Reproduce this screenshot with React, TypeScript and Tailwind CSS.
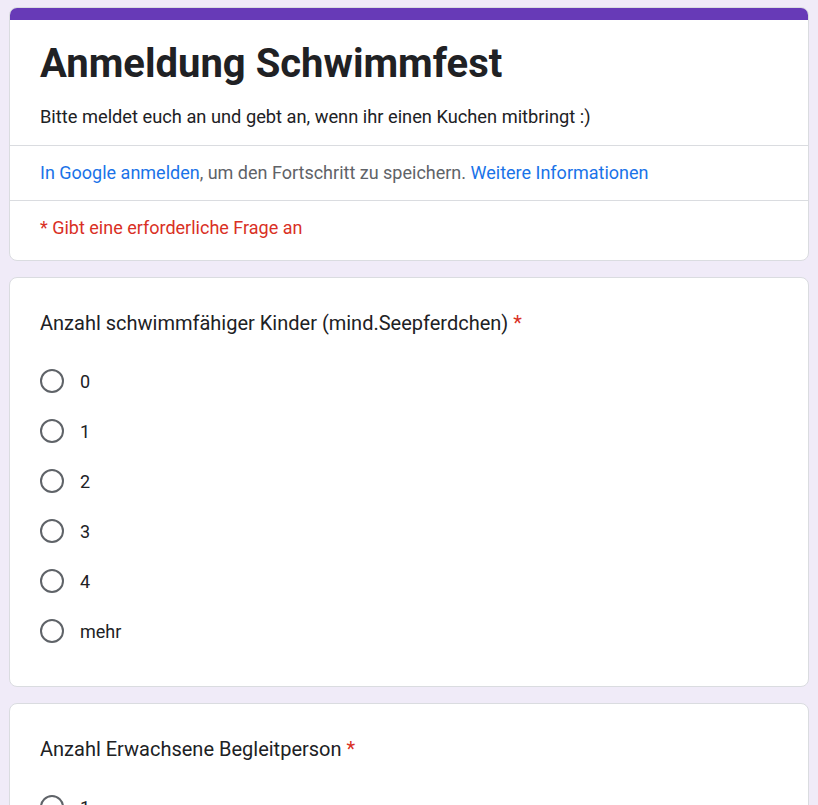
const options = ["0", "1", "2", "3", "4", "mehr"];

const Radio = ({ label }: { label: string }) => (
  <div className="flex h-[50px] items-center gap-4">
    <span className="h-6 w-6 rounded-full border-2 border-[#5f6368]" />
    <span className="text-[18px] text-[#202124]">{label}</span>
  </div>
);

const App = () => {
  return (
    <div
      className="h-[805px] overflow-hidden bg-[#f0ebf8] px-[9px] pt-[7px]"
      style={{ fontFamily: "Roboto, 'Noto Sans', sans-serif" }}
    >
      <div className="flex w-[800px] flex-col gap-4">
        {/* header card */}
        <div className="overflow-hidden rounded-lg border border-[#dadce0] bg-white">
          <div className="h-[12px] bg-[#673ab7]" />
          <div className="px-[30px] pb-[16px] pt-[20px]">
            <h1 className="text-[40px] font-bold leading-[48px] text-[#202124]">
              Anmeldung Schwimmfest
            </h1>
            <p className="mt-[17px] text-[18.25px] leading-6 text-[#202124]">
              Bitte meldet euch an und gebt an, wenn ihr einen Kuchen mitbringt :)
            </p>
          </div>
          <div className="border-t border-[#dadce0] px-[30px] pb-[15px] pt-[15px] text-[18px] leading-6 text-[#5f6368]">
            <span className="text-[#1a73e8]">In Google anmelden</span>, um den Fortschritt zu
            speichern. <span className="text-[#1a73e8]">Weitere Informationen</span>
          </div>
          <div className="border-t border-[#dadce0] px-[30px] pb-[20px] pt-[15px] text-[18px] leading-6 text-[#d93025]">
            * Gibt eine erforderliche Frage an
          </div>
        </div>

        {/* question 1 */}
        <div className="rounded-lg border border-[#dadce0] bg-white px-[30px] pb-[30px] pt-[31px]">
          <p className="text-[20px] leading-7 text-[#202124]">
            Anzahl schwimmfähiger Kinder (mind.Seepferdchen){" "}
            <span className="text-[#d93025]">*</span>
          </p>
          <div className="mt-[19px] flex flex-col">
            {options.map((o) => (
              <Radio key={o} label={o} />
            ))}
          </div>
        </div>

        {/* question 2 */}
        <div className="rounded-lg border border-[#dadce0] bg-white px-[30px] pb-[30px] pt-[31px]">
          <p className="text-[20px] leading-7 text-[#202124]">
            Anzahl Erwachsene Begleitperson <span className="text-[#d93025]">*</span>
          </p>
          <div className="mt-[19px] flex flex-col">
            {["1", "2", "3"].map((o) => (
              <Radio key={o} label={o} />
            ))}
          </div>
        </div>
      </div>
    </div>
  );
};

export default App;
